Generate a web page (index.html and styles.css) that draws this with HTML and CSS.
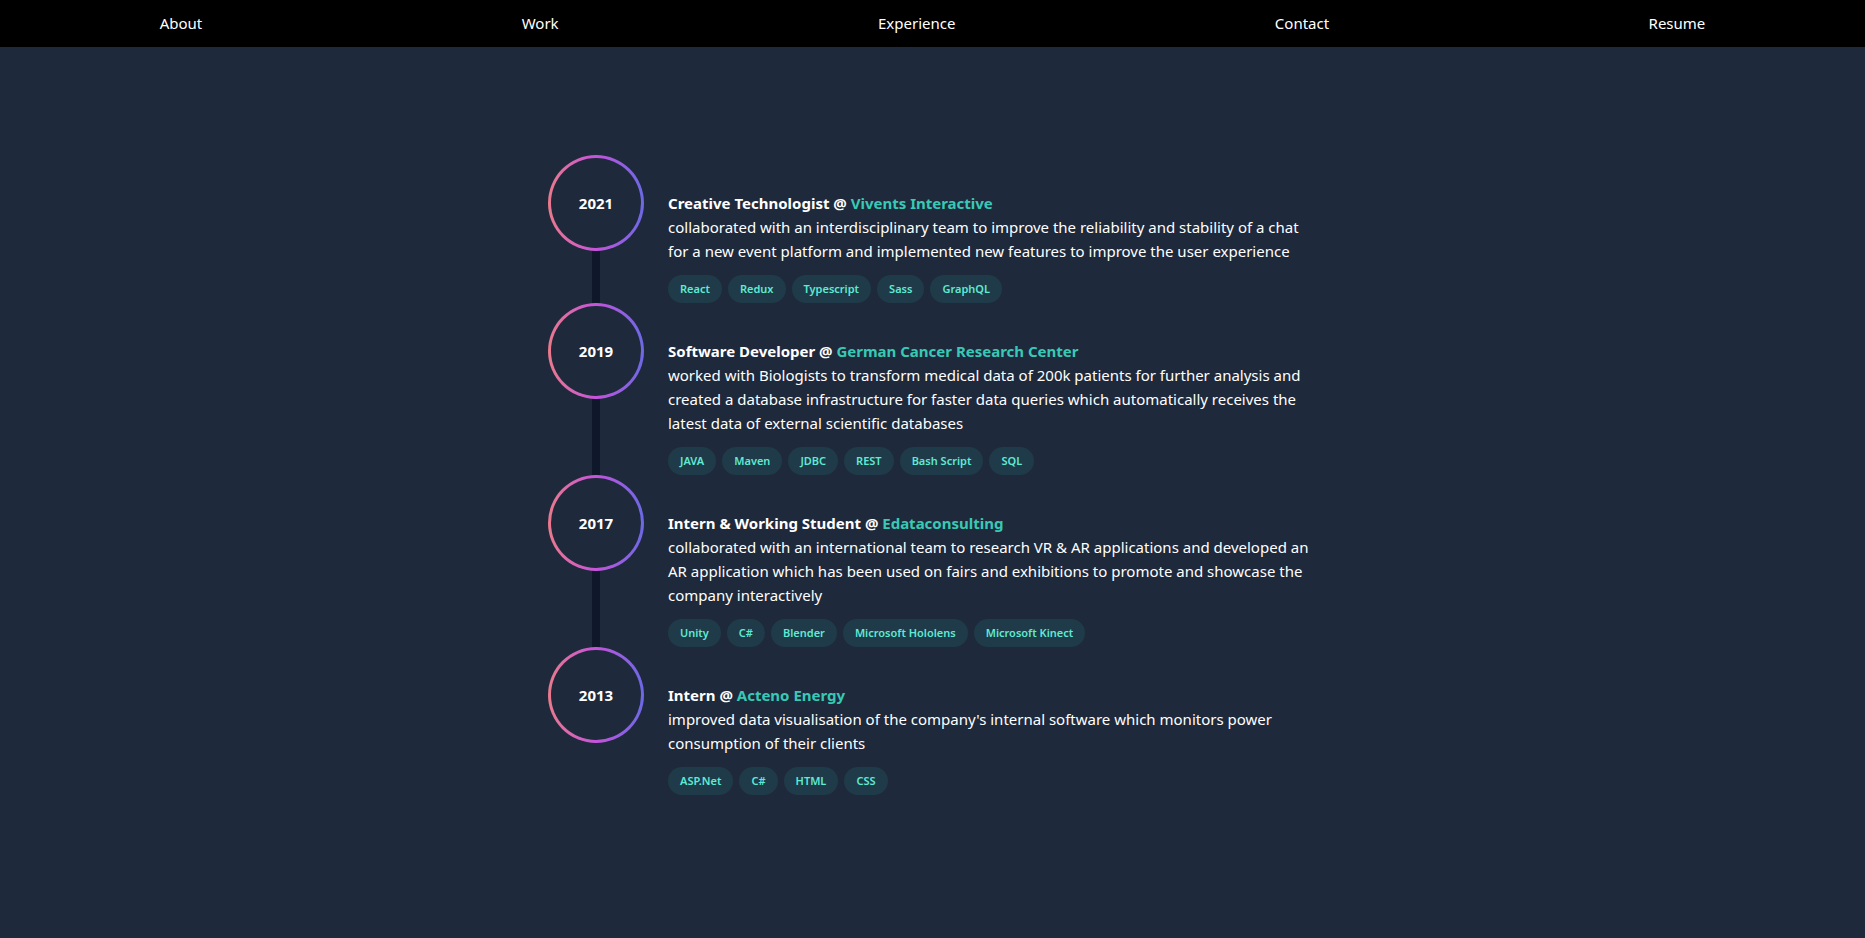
FILE: index.html
```html
<!DOCTYPE html>
<html lang="en">
<head>
<meta charset="utf-8">
<meta name="viewport" content="width=device-width, initial-scale=1">
<title>Experience</title>
<link rel="stylesheet" href="styles.css">
</head>
<body>
<nav class="nav">
  <a class="nav-link" href="#about">About</a>
  <a class="nav-link" href="#work">Work</a>
  <a class="nav-link" href="#experience">Experience</a>
  <a class="nav-link" href="#contact">Contact</a>
  <a class="nav-link" href="#resume">Resume</a>
</nav>
<main class="experience" id="experience">
  <ol class="timeline">
    <li class="entry">
      <div class="rail"><div class="year">2021</div></div>
      <div class="details">
        <h2 class="title">Creative Technologist @ <a class="company" href="#vivents">Vivents Interactive</a></h2>
        <p class="description">collaborated with an interdisciplinary team to improve the reliability and stability of a chat for a new event platform and implemented new features to improve the user experience</p>
        <ul class="tags"><li class="tag">React</li><li class="tag">Redux</li><li class="tag">Typescript</li><li class="tag">Sass</li><li class="tag">GraphQL</li></ul>
      </div>
    </li>
    <li class="entry">
      <div class="rail"><div class="year">2019</div></div>
      <div class="details">
        <h2 class="title">Software Developer @ <a class="company" href="#dkfz">German Cancer Research Center</a></h2>
        <p class="description">worked with Biologists to transform medical data of 200k patients for further analysis and created a database infrastructure for faster data queries which automatically receives the latest data of external scientific databases</p>
        <ul class="tags"><li class="tag">JAVA</li><li class="tag">Maven</li><li class="tag">JDBC</li><li class="tag">REST</li><li class="tag">Bash Script</li><li class="tag">SQL</li></ul>
      </div>
    </li>
    <li class="entry">
      <div class="rail"><div class="year">2017</div></div>
      <div class="details">
        <h2 class="title">Intern &amp; Working Student @ <a class="company" href="#edataconsulting">Edataconsulting</a></h2>
        <p class="description">collaborated with an international team to research VR &amp; AR applications and developed an AR application which has been used on fairs and exhibitions to promote and showcase the company interactively</p>
        <ul class="tags"><li class="tag">Unity</li><li class="tag">C#</li><li class="tag">Blender</li><li class="tag">Microsoft Hololens</li><li class="tag">Microsoft Kinect</li></ul>
      </div>
    </li>
    <li class="entry">
      <div class="rail"><div class="year">2013</div></div>
      <div class="details">
        <h2 class="title">Intern @ <a class="company" href="#acteno">Acteno Energy</a></h2>
        <p class="description">improved data visualisation of the company's internal software which monitors power consumption of their clients</p>
        <ul class="tags"><li class="tag">ASP.Net</li><li class="tag">C#</li><li class="tag">HTML</li><li class="tag">CSS</li></ul>
      </div>
    </li>
  </ol>
</main>
</body>
</html>
```
FILE: styles.css
```css
*, *::before, *::after { box-sizing: border-box; }

body {
  margin: 0;
  min-height: 100vh;
  background: #1e293b;
  color: #fff;
  font-family: "Noto Sans", "Open Sans", sans-serif;
  font-size: 15px;
  line-height: 24px;
}

a { color: inherit; text-decoration: none; }
ol, ul { margin: 0; padding: 0; list-style: none; }

.nav {
  display: flex;
  justify-content: space-around;
  padding: 11px 0 12px;
  background: #000;
}

.experience { padding: 108px 24px; }

.timeline {
  max-width: 769px;
  margin: 0 auto;
}

.entry {
  display: flex;
  gap: 24px;
}

.rail {
  display: flex;
  flex: none;
  flex-direction: column;
  align-items: center;
}

.rail::after {
  content: "";
  flex: 1;
  width: 8px;
  background: #0f172a;
}

.entry:last-child .rail::after { display: none; }

.year {
  display: grid;
  place-items: center;
  width: 96px;
  height: 96px;
  border: 3px solid transparent;
  border-radius: 50%;
  background:
    linear-gradient(#1e293b, #1e293b) padding-box,
    linear-gradient(to right, #ea7a8c, #c653dc, #6b69e4) border-box;
  font-weight: 700;
}

.details {
  flex: 1;
  min-width: 0;
  padding-top: 36px;
}

.title {
  margin: 0;
  font-size: 15px;
  font-weight: 700;
}

.company { color: #38c9b6; }

.description { margin: 0 0 12px; }

.tags {
  display: flex;
  flex-wrap: wrap;
  gap: 6px;
}

.tag {
  padding: 6px 12px;
  border-radius: 14px;
  background: rgb(45 212 191 / 10%);
  color: #5eead4;
  font-size: 11px;
  font-weight: 600;
  line-height: 16px;
}
```
